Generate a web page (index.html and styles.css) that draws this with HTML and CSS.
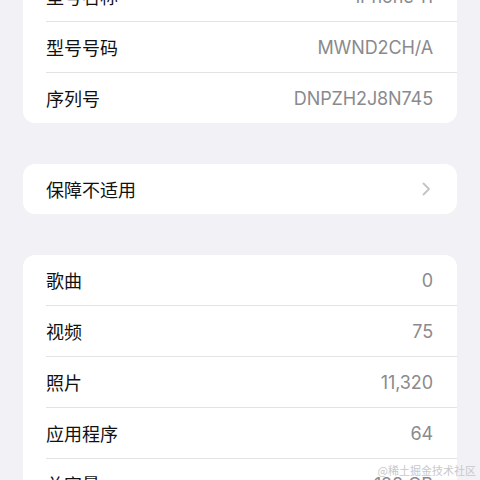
FILE: index.html
```html
<!DOCTYPE html>
<html lang="zh">
<head>
<meta charset="utf-8">
<link rel="stylesheet" href="styles.css">
</head>
<body>
<main class="page">
  <section class="card card-first">
    <div class="row"><span class="label">型号名称</span><span class="value">iPhone 11</span></div>
    <div class="row"><span class="label">型号号码</span><span class="value">MWND2CH/A</span></div>
    <div class="row"><span class="label">序列号</span><span class="value">DNPZH2J8N745</span></div>
  </section>
  <section class="card">
    <div class="row"><span class="label">保障不适用</span>
      <svg class="chevron" width="9" height="14" viewBox="0 0 9 14"><path d="M1.5 1.5 L7 7 L1.5 12.5" fill="none" stroke="#c4c4c8" stroke-width="1.8" stroke-linecap="round" stroke-linejoin="round"/></svg>
    </div>
  </section>
  <section class="card">
    <div class="row"><span class="label">歌曲</span><span class="value">0</span></div>
    <div class="row"><span class="label">视频</span><span class="value">75</span></div>
    <div class="row"><span class="label">照片</span><span class="value">11,320</span></div>
    <div class="row"><span class="label">应用程序</span><span class="value">64</span></div>
    <div class="row"><span class="label">总容量</span><span class="value">128 GB</span></div>
  </section>
</main>
<div class="watermark">@稀土掘金技术社区</div>
</body>
</html>
```
FILE: styles.css
```css
html, body {
  margin: 0;
  padding: 0;
  background: #f1f1f6;
  overflow: hidden;
  height: 480px;
}
body {
  font-family: "Inter", "Noto Sans CJK SC", sans-serif;
  position: relative;
}
.page {
  display: flex;
  flex-direction: column;
  gap: 41px;
  padding: 0 23px;
}
.card {
  background: #ffffff;
  border-radius: 12px;
  padding-left: 23px;
  overflow: hidden;
}
.card-first {
  margin-top: -29px;
}
.row {
  height: 50px;
  display: flex;
  align-items: center;
  justify-content: space-between;
  padding-right: 24px;
  border-bottom: 1px solid #e3e3e6;
}
.row:last-child {
  border-bottom: none;
}
.label {
  font-size: 18px;
  color: #111111;
  font-family: "Noto Sans CJK SC", sans-serif;
}
.value {
  font-size: 18px;
  color: #8a8a8e;
  font-family: "Inter", "Noto Sans CJK SC", sans-serif;
  letter-spacing: -0.1px;
}
.chevron {
  margin-right: 2px;
}
.watermark {
  position: absolute;
  right: 4px;
  top: 462px;
  font-size: 11px;
  color: #c8c8cc;
  font-family: "Noto Sans CJK SC", sans-serif;
}
```
